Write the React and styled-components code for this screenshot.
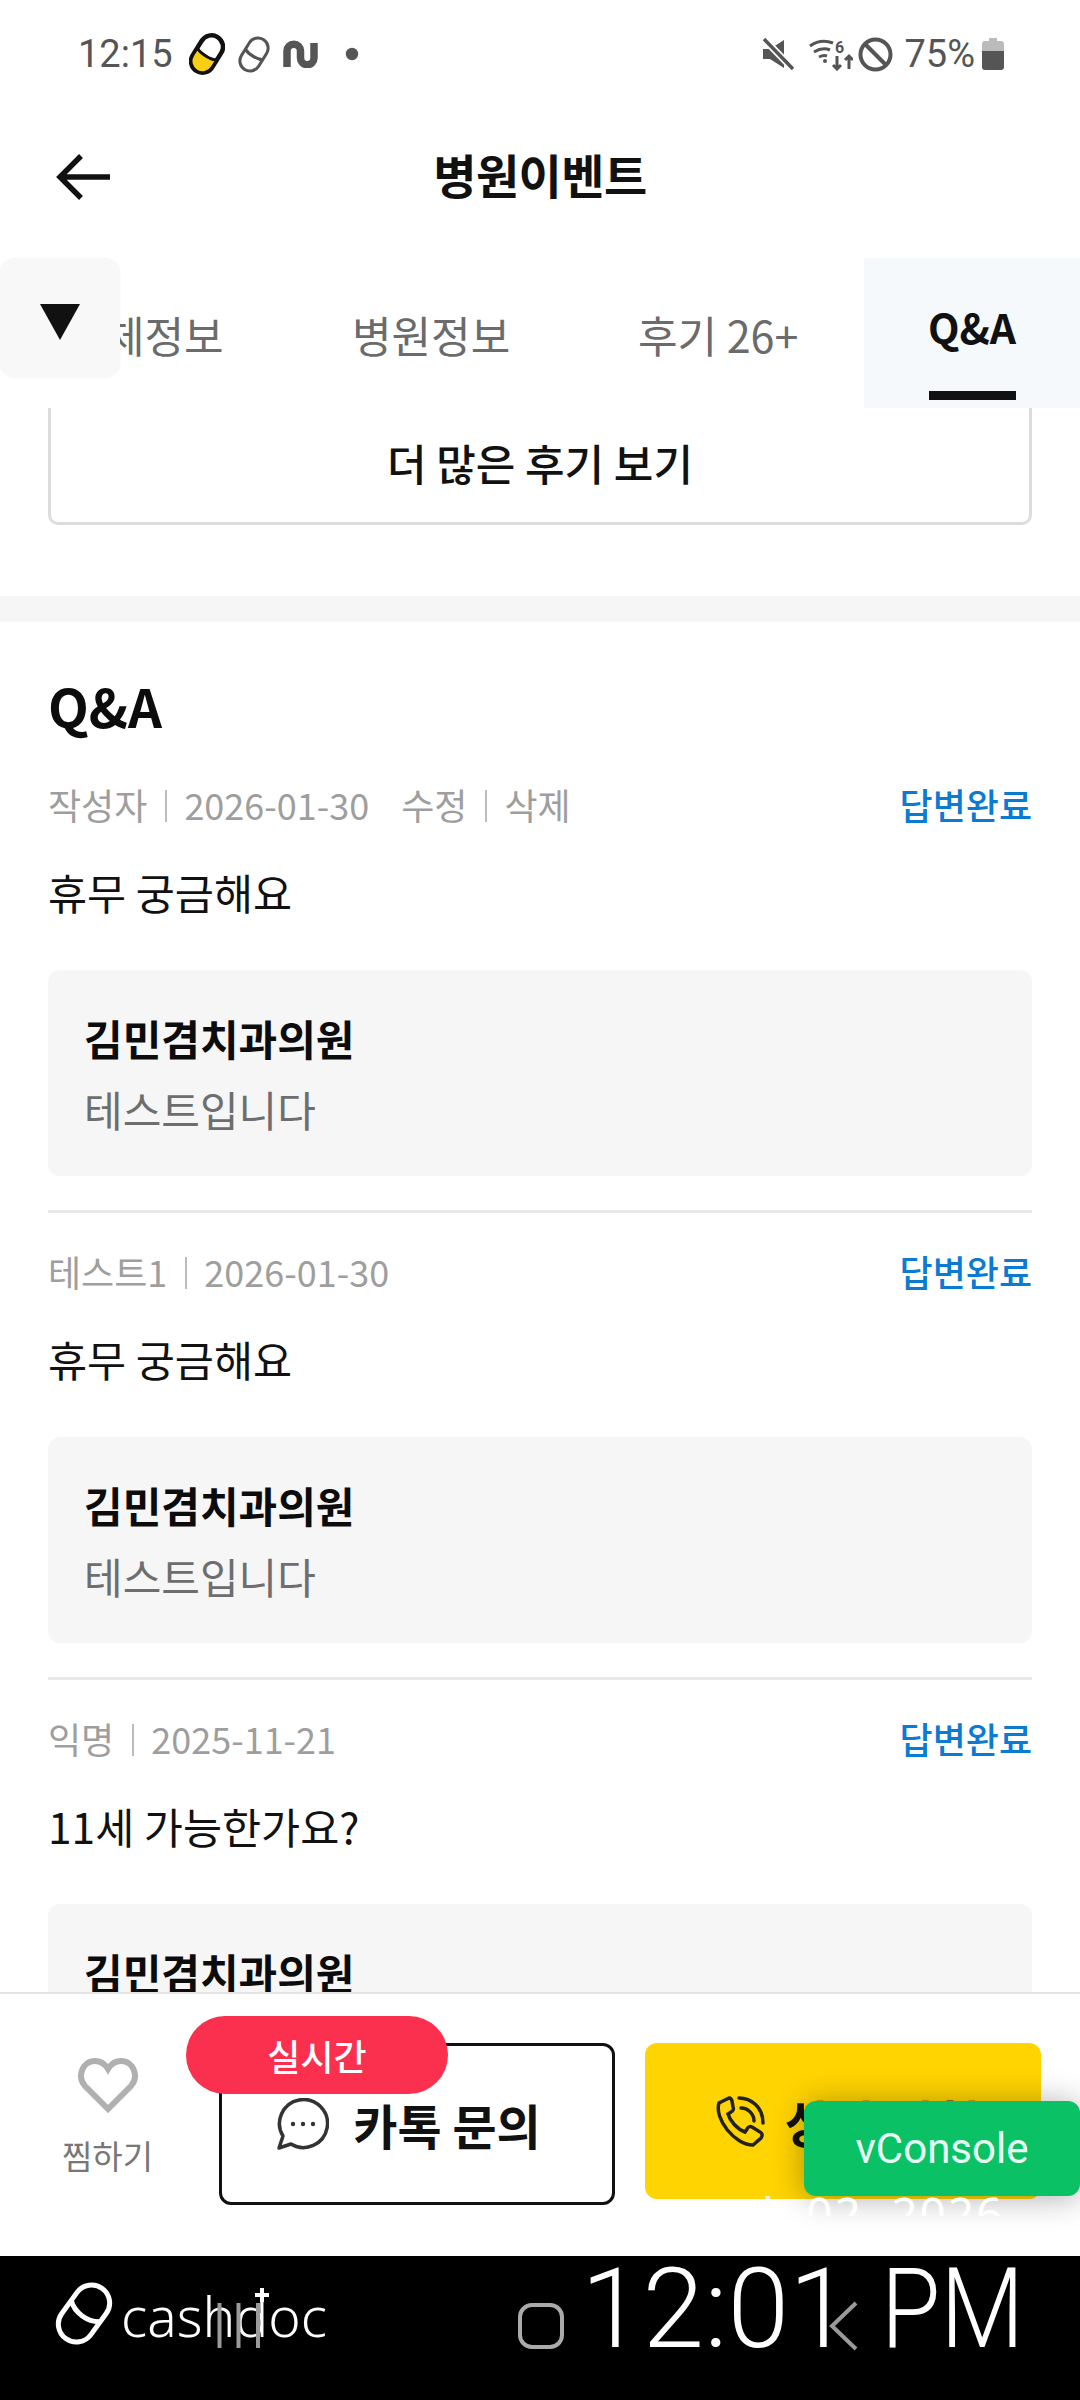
import React from "react";
import styled, { createGlobalStyle } from "styled-components";

const KR = `"Noto Sans CJK KR", "Noto Sans", sans-serif`;

const Global = createGlobalStyle`
  html, body { margin: 0; padding: 0; background: #fff; }
  #root { width: 1080px; height: 2400px; overflow: hidden; }
  * { box-sizing: border-box; }
`;

const Screen = styled.div`
  position: relative;
  width: 1080px;
  height: 2400px;
  display: flex;
  flex-direction: column;
  overflow: hidden;
  font-family: ${KR};
  background: #fff;
`;

const StatusBar = styled.div`
  height: 108px;
  flex: none;
  display: flex;
  align-items: center;
  justify-content: space-between;
  padding: 0 76px 0 78px;
  color: #555;
  font-family: Roboto, sans-serif;
  font-size: 38px;
`;
const StatusGroup = styled.div`
  display: flex;
  align-items: center;
`;
const Spacer = styled.span`
  flex: none;
  width: ${p => p.$w}px;
`;
const HeaderBar = styled.div`
  height: 134px;
  flex: none;
  display: flex;
  align-items: center;
  justify-content: center;
  position: relative;
  padding-bottom: 3px;
`;
const BackBtn = styled.div`
  position: absolute;
  left: 56px;
  top: 46px;
  width: 56px;
  height: 48px;
`;
const Title = styled.div`
  font-size: 47px;
  font-weight: 700;
  color: #111;
  letter-spacing: -0.5px;
`;
const Tabs = styled.div`
  position: relative;
  height: 150px;
  flex: none;
  margin-top: 16px;
  background: #fff;
  z-index: 2;
`;
const Tab = styled.div`
  position: absolute;
  left: ${p => p.$x}px;
  top: 46px;
  font-size: 43px;
  color: #6b6b6b;
  white-space: nowrap;
  line-height: 60px;
`;
const ActiveTab = styled.div`
  position: absolute;
  right: 0;
  top: 0;
  width: 216px;
  height: 150px;
  background: #f5f9fc;
  display: flex;
  flex-direction: column;
  align-items: center;
`;
const ActiveLabel = styled.div`
  margin-top: 38px;
  font-size: 41px;
  font-weight: 700;
  color: #111;
  line-height: 60px;
`;
const ActiveBar = styled.div`
  width: 87px;
  height: 9px;
  background: #111;
  margin-top: 35px;
`;
const Collapse = styled.div`
  position: absolute;
  left: 0;
  top: 0;
  width: 120px;
  height: 120px;
  background: #f8f8f8;
  border-radius: 16px;
  box-shadow: 0 0 2px rgba(0,0,0,.06);
  display: flex;
  justify-content: center;
  padding-top: 46px;
  z-index: 1;
`;
const MoreWrap = styled.div`
  margin: -6px 48px 0;
  height: 123px;
  flex: none;
`;
const MoreBtn = styled.div`
  height: 123px;
  border: 3px solid #dcdcdc;
  border-top: none;
  border-radius: 0 0 10px 10px;
  display: flex;
  align-items: center;
  justify-content: center;
  font-size: 43px;
  font-weight: 500;
  color: #111;
`;
const Divider = styled.div`
  height: 26px;
  flex: none;
  margin-top: 71px;
  background: #f6f6f6;
`;
const Section = styled.div`
  padding: 52px 48px 0;
  flex: 1;
  overflow: hidden;
`;
const SectionTitle = styled.div`
  font-size: 53px;
  font-weight: 700;
  color: #0c0c0c;
  line-height: 62px;
`;
const Item = styled.div`
  padding-top: ${p => (p.$first ? 38 : 0)}px;
`;
const Meta = styled.div`
  height: 60px;
  display: flex;
  align-items: center;
  justify-content: space-between;
`;
const MetaLeft = styled.div`
  display: flex;
  align-items: center;
  font-size: 36px;
  color: #9e9e9e;
  white-space: pre;
`;
const MetaSep = styled.span`
  width: 37px;
  height: 32px;
  margin-top: 3px;
  display: flex;
  justify-content: center;
  &::before {
    content: "";
    width: 2px;
    height: 100%;
    background: #bdbdbd;
  }
`;
const MetaAction = styled.span`
  margin-left: ${p => p.$gap || 0}px;
`;
const Status = styled.div`
  font-size: 36px;
  font-weight: 500;
  color: #0a7bd1;
`;
const Question = styled.div`
  margin-top: 28px;
  font-size: 42.5px;
  color: #111;
  line-height: 60px;
`;
const Answer = styled.div`
  margin-top: 48px;
  background: #f6f6f6;
  border-radius: 12px;
  height: 206px;
  padding: 40px 36px 0;
`;
const AnswerName = styled.div`
  font-size: 42px;
  font-weight: 700;
  color: #0c0c0c;
  line-height: 56px;
`;
const AnswerBody = styled.div`
  margin-top: 15px;
  font-size: 42px;
  color: #6e6e6e;
  line-height: 56px;
`;
const Rule = styled.div`
  height: 3px;
  background: #e8e8e8;
  margin: 34px 0 28px;
`;
const Footer = styled.div`
  position: absolute;
  left: 0;
  right: 0;
  top: 1992px;
  height: 264px;
  background: #fff;
  border-top: 2px solid #e4e4e4;
  z-index: 3;
`;
const FooterRow = styled.div`
  display: flex;
  align-items: flex-start;
  padding: 49px 0 0 0;
`;
const Wish = styled.div`
  width: 219px;
  padding-right: 4px;
  padding-top: 14px;
  display: flex;
  flex-direction: column;
  align-items: center;
  color: #777;
  font-size: 33px;
  line-height: 50px;
`;
const WishLabel = styled.span`
  margin-top: 17px;
`;
const ChatBtn = styled.div`
  width: 396px;
  height: 162px;
  border: 3px solid #111;
  border-radius: 12px;
  padding-right: 16px;
  display: flex;
  align-items: center;
  justify-content: center;
  gap: 24px;
  font-size: 48px;
  font-weight: 700;
  color: #111;
`;
const CallBtn = styled.div`
  margin-left: 30px;
  width: 396px;
  height: 156px;
  background: #ffd400;
  border-radius: 12px;
  display: flex;
  align-items: center;
  padding-left: 70px;
  gap: 20px;
  font-size: 50px;
  font-weight: 700;
  color: #111;
`;
const LiveBadge = styled.div`
  position: absolute;
  left: 186px;
  top: 22px;
  width: 262px;
  height: 78px;
  border-radius: 39px;
  background: #fb304e;
  color: #fff;
  font-size: 36px;
  font-weight: 500;
  display: flex;
  align-items: center;
  justify-content: center;
`;
const VConsole = styled.div`
  position: absolute;
  left: 804px;
  top: 2101px;
  width: 276px;
  height: 95px;
  background: #0ac265;
  border-radius: 12px;
  color: #e9fff3;
  font-family: Roboto, sans-serif;
  font-size: 42px;
  display: flex;
  align-items: center;
  justify-content: center;
  box-shadow: 0 2px 32px rgba(0,0,0,.32);
  z-index: 5;
`;
const GhostDate = styled.div`
  position: absolute;
  left: 762px;
  top: 2196px;
  height: 20px;
  overflow: hidden;
  color: #fff;
  font-family: "Noto Sans", sans-serif;
  font-size: 46px;
  letter-spacing: 2px;
  line-height: 34px;
  white-space: pre;
  z-index: 5;
`;
const BlackBar = styled.div`
  position: absolute;
  left: 0;
  right: 0;
  top: 2256px;
  height: 144px;
  background: #000;
  z-index: 6;
  color: #fff;
`;
const Brand = styled.div`
  position: absolute;
  left: 54px;
  top: 25px;
  display: flex;
  align-items: flex-start;
  gap: 7px;
`;
const BrandWord = styled.div`
  font-family: "Noto Sans", sans-serif;
  font-size: 55px;
  font-weight: 300;
  line-height: 70px;
`;
const Clock = styled.div`
  position: absolute;
  left: 581px;
  top: -12px;
  font-family: Roboto, sans-serif;
  font-size: 111px;
  font-weight: 300;
  line-height: 130px;
  white-space: nowrap;
`;
const Meridiem = styled.span`
  display: inline-block;
  margin-left: 3px;
  transform: scaleX(0.87);
  transform-origin: left center;
`;
const NavIcons = styled.svg`
  position: absolute;
  left: 0;
  top: 0;
`;

const Pill = ({ fill, w, h }) => (
  <svg width={w} height={h} viewBox="-18 -21 36 42" fill="none">
    <g transform="rotate(32)">
      <rect x="-11.500" y="-20" width="23" height="40" rx="11.500" fill="#fff" stroke={fill ? "#111" : "#555"} strokeWidth={fill ? 4.5 : 3.5} />
      {fill && <path d="M-10 1h20v7.500a10 10 0 0 1-20 0z" fill="#f7cf14" />}
      <path d="M-11.500 0C-6 3 6 3 11.500 0" stroke={fill ? "#111" : "#555"} strokeWidth={fill ? 3 : 3.5} />
    </g>
  </svg>
);

const QA = ({ meta, q, first, cut }) => (
  <Item $first={first}>
    <Meta>
      <MetaLeft>{meta}</MetaLeft>
      <Status>답변완료</Status>
    </Meta>
    <Question>{q}</Question>
    <Answer>
      <AnswerName>김민겸치과의원</AnswerName>
      {!cut && <AnswerBody>테스트입니다</AnswerBody>}
    </Answer>
    {!cut && <Rule />}
  </Item>
);

export default function App() {
  return (
    <Screen>
      <Global />
      <StatusBar>
        <StatusGroup>
          <span>12:15</span>
          <Spacer $w={16} />
          <Pill fill w={36} h={42} />
          <Spacer $w={13} />
          <Pill w={32} h={37} />
          <Spacer $w={13} />
          <svg width="36" height="28" viewBox="0 0 36 28" fill="none">
            <path d="M4 27V11a6.500 6.500 0 0 1 13.500 0v7a6.500 6.500 0 0 0 13.500 0V3" stroke="#555" strokeWidth="7.5" />
          </svg>
          <Spacer $w={26} />
          <svg width="14" height="14"><circle cx="7" cy="7" r="6.200" fill="#555" /></svg>
        </StatusGroup>
        <StatusGroup>
          <svg width="32" height="32" viewBox="0 0 32 32" fill="none">
            <path d="M1 11h7L22 2v28L8 21H1z" fill="#555" />
            <path d="M2 1l29 30" stroke="#fff" strokeWidth="7" />
            <path d="M2 1l29 30" stroke="#555" strokeWidth="3.5" />
          </svg>
          <Spacer $w={15} />
          <svg width="44" height="34" viewBox="0 0 44 34" fill="none" stroke="#555" strokeWidth="3">
            <path d="M1 9c7-5 15-6 23-3M5 15c5-3 11-4 16-2M10 20c2-1 5-2 8-1" />
            <circle cx="16" cy="24" r="2" fill="#555" stroke="none" />
            <path d="M28 19v13M24 28l4 4 4-4M40 32V19M36 23l4-4 4 4" />
            <text x="26" y="16" fontSize="16" fontFamily="Roboto" fontWeight="700" fill="#555" stroke="none">6</text>
          </svg>
          <Spacer $w={5} />
          <svg width="35" height="35" viewBox="0 0 35 35" fill="none" stroke="#555" strokeWidth="4">
            <circle cx="17.500" cy="17.500" r="15" />
            <path d="M7 7l21 21" />
          </svg>
          <Spacer $w={11} />
          <span>75%</span>
          <Spacer $w={7} />
          <svg width="22" height="32" viewBox="0 0 22 32">
            <path d="M7 0h8v3h4a3 3 0 0 1 3 3v7H0V6a3 3 0 0 1 3-3h4z" fill="#bbb" />
            <path d="M0 13h22v16a3 3 0 0 1-3 3H3a3 3 0 0 1-3-3z" fill="#555" />
          </svg>
        </StatusGroup>
      </StatusBar>
      <HeaderBar>
        <BackBtn>
          <svg width="54" height="46" viewBox="0 0 54 46" fill="none" stroke="#111" strokeWidth="5.5">
            <path d="M54 23H4M25 2L4 23l21 21" />
          </svg>
        </BackBtn>
        <Title>병원이벤트</Title>
      </HeaderBar>
      <Tabs>
        <Tab $x={105}>체정보</Tab>
        <Tab $x={352}>병원정보</Tab>
        <Tab $x={638}>후기 26+</Tab>
        <ActiveTab>
          <ActiveLabel>Q&amp;A</ActiveLabel>
          <ActiveBar />
        </ActiveTab>
        <Collapse>
          <svg width="40" height="36" viewBox="0 0 40 36"><path d="M0 0h40L20 36z" fill="#111" /></svg>
        </Collapse>
      </Tabs>
      <MoreWrap><MoreBtn>더 많은 후기 보기</MoreBtn></MoreWrap>
      <Divider />
      <Section>
        <SectionTitle>Q&amp;A</SectionTitle>
        <QA
          first
          meta={<>작성자<MetaSep />2026-01-30<MetaAction $gap={32}>수정</MetaAction><MetaSep />삭제</>}
          q="휴무 궁금해요"
        />
        <QA meta={<>테스트1<MetaSep />2026-01-30</>} q="휴무 궁금해요" />
        <QA meta={<>익명<MetaSep />2025-11-21</>} q="11세 가능한가요?" cut />
      </Section>
      <Footer>
        <FooterRow>
          <Wish>
            <svg width="60" height="56" viewBox="0 0 60 56" fill="none" stroke="#b0b0b0" strokeWidth="6">
              <path d="M30 52L7 29C-1 20 4 4 17 4c6 0 10 3 13 8 3-5 7-8 13-8 13 0 18 16 10 25z" />
            </svg>
            <WishLabel>찜하기</WishLabel>
          </Wish>
          <ChatBtn>
            <svg width="52" height="52" viewBox="0 0 52 52" fill="none" stroke="#333" strokeWidth="3.5">
              <path d="M2 50l4-12A24 24 0 1 1 14 46z" strokeLinejoin="round" />
              <circle cx="16" cy="26" r="2.200" fill="#333" stroke="none" />
              <circle cx="26" cy="26" r="2.200" fill="#333" stroke="none" />
              <circle cx="36" cy="26" r="2.200" fill="#333" stroke="none" />
            </svg>
            카톡 문의
          </ChatBtn>
          <CallBtn>
            <svg width="50" height="52" viewBox="0 0 50 52" fill="none" stroke="#222" strokeWidth="3.5" strokeLinecap="round">
              <path d="M14 3L4 8C-1 24 20 50 38 50l8-7c2-3 1-5-1-6l-8-5c-2-1-4 0-5 2l-2 3C22 34 15 26 13 19l3-2c2-1 3-3 2-5L17 6c-.5-2-2-3-3-3z" />
              <path d="M24 3c12 0 24 9 24 25M26 13c7 0 13 6 13 13" />
            </svg>
            상담 신청
          </CallBtn>
        </FooterRow>
        <LiveBadge>실시간</LiveBadge>
      </Footer>
      <VConsole>vConsole</VConsole>
      <GhostDate>b 02. 2026</GhostDate>
      <BlackBar>
        <Brand>
          <svg width="60" height="65" viewBox="-30 -32.500 60 65" fill="none" stroke="#fff" strokeWidth="5">
            <g transform="rotate(36)">
              <rect x="-18" y="-31" width="36" height="62" rx="18" />
              <path d="M-18 -3C-8 5 8 5 18 -3" />
            </g>
          </svg>
          <BrandWord>cashdoc</BrandWord>
        </Brand>
        <Clock>12:01 <Meridiem>PM</Meridiem></Clock>
        <NavIcons width="1080" height="144" viewBox="0 0 1080 144" fill="none">
          <path d="M262 32v14M255 39h14" stroke="#fff" strokeWidth="4" />
          <path d="M219.500 47v45M238.500 47v45M258 47v45" stroke="#9a9a9a" strokeWidth="4" />
          <rect x="520" y="49" width="42" height="42" rx="12" stroke="#aaa" strokeWidth="4" />
          <path d="M856 47l-24 23 24 23" stroke="#9a9a9a" strokeWidth="4" />
        </NavIcons>
      </BlackBar>
    </Screen>
  );
}
